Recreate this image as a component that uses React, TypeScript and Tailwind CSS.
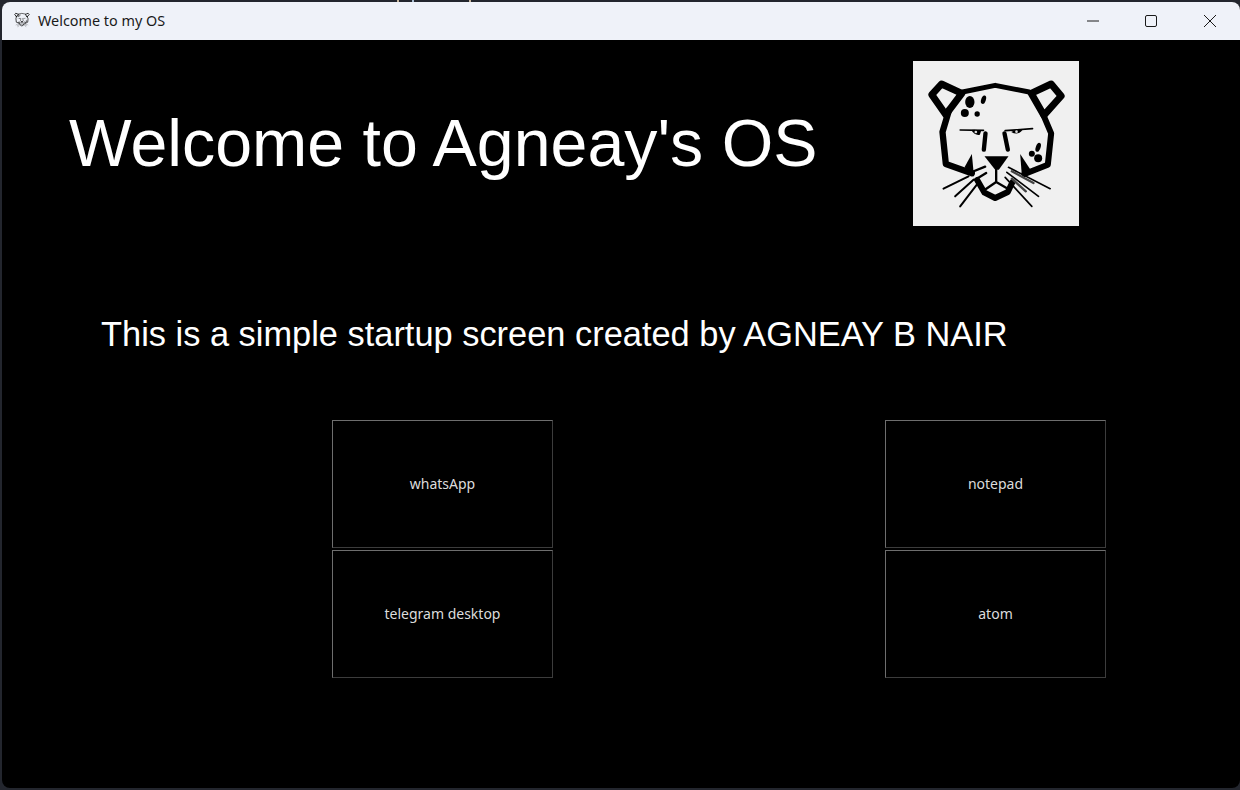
function CheetahMark({ box, className }: { box: string; className: string }) {
  return (
    <svg viewBox={box} className={className}>
      <g fill="none" stroke="#000" strokeLinejoin="round" strokeLinecap="round">
        <path d="M170 116 L109 88 L80 120 L122 180 Z" strokeWidth="21" />
        <path d="M378 116 L438 88 L468 124 L416 182 Z" strokeWidth="21" />
        <path d="M172 112 L270 92 L372 112" strokeWidth="15" />
        <path d="M132 165 L112 232 L122 328 L200 356" strokeWidth="19" />
        <path d="M410 170 L438 236 L428 330 L358 358" strokeWidth="18" />
        <path d="M216 376 L238 414 L270 430 L308 412 L322 382" strokeWidth="18" />
        <path d="M273 340 L273 382 L238 406 M273 382 L304 400" strokeWidth="7" />
        <path d="M165 226 L235 227 M300 228 L382 222" strokeWidth="5" />
        <path d="M241 236 L236 285" strokeWidth="13" />
        <path d="M298 236 L308 285" strokeWidth="13" />
        <path d="M115 402 L190 365 M150 425 L205 375 M165 455 L215 390" strokeWidth="6" />
        <path d="M200 352 L240 336 M210 375 L243 355" strokeWidth="7" />
        <path d="M310 338 L435 402 M305 353 L400 425 M300 368 L380 455" strokeWidth="5" />
        <path d="M320 350 L385 385 M320 372 L362 410" stroke="#444" strokeWidth="7" />
      </g>
      <g fill="#000">
        <path d="M238 305 L310 305 L281 345 L270 345 Z" />
        <path d="M178 338 L200 298 L206 360 Z" />
        <path d="M345 298 L376 345 L350 362 Z" />
        <ellipse cx="194" cy="142" rx="14" ry="18" />
        <ellipse cx="235" cy="135" rx="7" ry="13" transform="rotate(18 235 135)" />
        <circle cx="179" cy="175" r="12" />
        <circle cx="216" cy="178" r="8" />
        <ellipse cx="399" cy="278" rx="7" ry="14" transform="rotate(20 399 278)" />
        <circle cx="380" cy="297" r="9" />
        <circle cx="399" cy="311" r="12" />
        <path d="M198 226 Q212 224 228 228 L224 240 Q210 244 198 226 Z" />
        <path d="M318 232 Q334 222 352 226 Q338 244 318 232 Z" />
      </g>
      <circle cx="212" cy="232" r="4" fill="#ddd" />
      <circle cx="334" cy="231" r="4" fill="#ddd" />
    </svg>
  );
}

function AppButton({ label }: { label: string }) {
  return (
    <button className="w-[221px] h-[128px] pb-[1px] border border-t-[#6e6e6e] border-l-[#6e6e6e] border-r-[#3c3c3c] border-b-[#3c3c3c] bg-black text-[#dcdcdc] text-[14px]">
      {label}
    </button>
  );
}

function Column({ top, bottom }: { top: string; bottom: string }) {
  return (
    <div className="flex flex-col gap-[2px]">
      <AppButton label={top} />
      <AppButton label={bottom} />
    </div>
  );
}

export default function App() {
  return (
    <div className="relative w-[1240px] h-[790px] overflow-hidden bg-[#23262e] pt-[2px] pl-[2px] font-['Noto_Sans','Open_Sans',sans-serif]">
      <span className="absolute top-0 left-[397px] w-[2px] h-[2px] bg-[#c9b8a0]" />
      <span className="absolute top-0 left-[412px] w-[2px] h-[2px] bg-[#a8bcd0]" />
      <span className="absolute top-0 left-[469px] w-[2px] h-[2px] bg-[#c9b8a0]" />
      <div className="w-[1238px] h-[786px] flex flex-col overflow-hidden rounded-t-[8px] rounded-b-[8px] bg-black">
        <header className="h-[38px] shrink-0 flex items-center bg-[#eff2f9] text-[#1a1a1a]">
          <CheetahMark box="60 70 430 400" className="w-[16px] h-[16px] ml-[12px] mr-[8px] -mt-[2px]" />
          <span className="text-[14.4px] leading-none">Welcome to my OS</span>
          <div className="ml-auto flex items-center pr-[1px]">
            <button className="w-[58px] h-[38px] flex items-center justify-center">
              <svg viewBox="0 0 12 12" className="w-[12px] h-[12px]"><path d="M0 6 H12" stroke="#1a1a1a" strokeWidth="1" /></svg>
            </button>
            <button className="w-[58px] h-[38px] flex items-center justify-center">
              <svg viewBox="0 0 12 12" className="w-[12px] h-[12px]"><rect x="0.5" y="0.5" width="11" height="11" rx="1.5" fill="none" stroke="#1a1a1a" strokeWidth="1" /></svg>
            </button>
            <button className="w-[59px] h-[38px] flex items-center justify-center">
              <svg viewBox="0 0 12 12" className="w-[12px] h-[12px]"><path d="M0 0 L12 12 M12 0 L0 12" stroke="#1a1a1a" strokeWidth="1" /></svg>
            </button>
          </div>
        </header>
        <main className="flex-1 flex flex-col font-['Liberation_Sans',Arial,sans-serif] text-white">
          <div className="flex items-start pt-[21px]">
            <h1 className="ml-[67px] mt-[37px] text-[66.3px] leading-[90px] whitespace-nowrap">Welcome to Agneay's OS</h1>
            <div className="ml-[96px] bg-[#f0f0f0]">
              <CheetahMark box="25 19 495 495" className="w-[166px] h-[165px] blur-[0.4px]" />
            </div>
          </div>
          <p className="ml-[99px] mt-[83px] text-[34.4px] leading-[50px] whitespace-nowrap">This is a simple startup screen created by AGNEAY B NAIR</p>
          <div className="mt-[61px] ml-[330px] flex gap-[332px] font-['Noto_Sans','Open_Sans',sans-serif]">
            <Column top="whatsApp" bottom="telegram desktop" />
            <Column top="notepad" bottom="atom" />
          </div>
        </main>
      </div>
    </div>
  );
}
